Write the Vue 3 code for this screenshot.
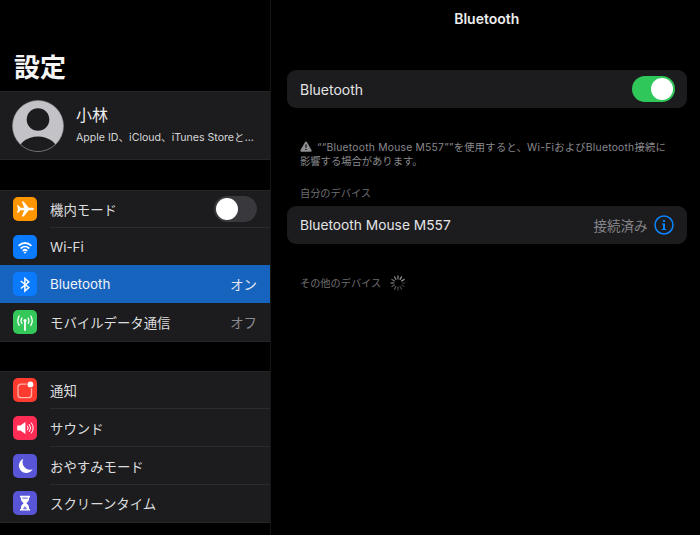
<script setup>
const groupOne = [
  { key: 'plane', label: '機内モード', bg: '#ff9500', toggle: true },
  { key: 'wifi', label: 'Wi-Fi', bg: '#0a7aff' },
  { key: 'bt', label: 'Bluetooth', bg: '#0a7aff', value: 'オン', active: true },
  { key: 'cell', label: 'モバイルデータ通信', bg: '#34c759', value: 'オフ' }
]
const groupTwo = [
  { key: 'notify', label: '通知', bg: '#ff3b30' },
  { key: 'sound', label: 'サウンド', bg: '#ff2d55' },
  { key: 'moon', label: 'おやすみモード', bg: '#5856d6' },
  { key: 'hour', label: 'スクリーンタイム', bg: '#5856d6' }
]
const groups = [groupOne, groupTwo]
const spokes = Array.from({ length: 12 }, (_, i) => ({
  angle: i * 30,
  opacity: 0.2 + (((i + 9) % 12) / 11) * 0.6
}))
</script>

<template>
  <div class="screen">
    <aside class="sidebar">
      <h1 class="title">設定</h1>
      <section class="profile">
        <svg class="avatar" viewBox="0 0 52 52">
          <defs>
            <clipPath id="avatar-clip"><circle cx="26" cy="26" r="25.5" /></clipPath>
          </defs>
          <circle cx="26" cy="26" r="25.5" fill="#c2c2c7" />
          <g clip-path="url(#avatar-clip)">
            <circle cx="26" cy="19.500" r="11.300" fill="#1c1c1e" />
            <ellipse cx="26" cy="52" rx="20" ry="15.5" fill="#1c1c1e" />
          </g>
          <circle cx="26" cy="26" r="25.5" fill="none" stroke="#8e8e93" stroke-width="0.6" />
        </svg>
        <div class="profile-text">
          <div class="profile-name">小林</div>
          <div class="profile-sub">Apple ID、iCloud、iTunes Storeと...</div>
        </div>
      </section>

      <section v-for="(group, g) in groups" :key="g" class="group">
        <div v-for="row in group" :key="row.key" class="row" :class="{ active: row.active }">
          <span class="icon" :style="{ background: row.bg }">
            <svg viewBox="0 0 24 24">
              <path v-if="row.key === 'plane'" fill="#fff" d="M4 8.200h1.300l2.300 2.500h3.600L8.800 4.500h1.900l5 6.200h3.200c1 0 2.100.6 2.100 1.300s-1.100 1.300-2.100 1.300h-3.200l-5 6.200H8.800l2.400-6.200H7.600l-2.300 2.500H4l1-3.800z" />
              <g v-else-if="row.key === 'wifi'" fill="none" stroke="#fff" stroke-width="1.800" stroke-linecap="round">
                <path d="M6.200 10.300a8.500 8.500 0 0 1 11.600 0" />
                <path d="M8.300 13a5.400 5.400 0 0 1 7.400 0" />
                <path d="M10.300 15.500a2.500 2.500 0 0 1 3.400 0" />
                <circle cx="12" cy="17.600" r=".6" fill="#fff" stroke-width="1" />
              </g>
              <path v-else-if="row.key === 'bt'" fill="none" stroke="#fff" stroke-width="1.500" stroke-linejoin="miter" d="M7.800 9l8 6.500-3.900 3.500V6.500l3.900 3.500-8 6.500" />
              <g v-else-if="row.key === 'cell'" fill="none" stroke="#fff" stroke-width="1.300" stroke-linecap="round">
                <path d="M12 12v8" stroke-width="1.800" />
                <circle cx="12" cy="10.600" r="1.600" fill="#fff" stroke="none" />
                <path d="M8.900 8a5 5 0 0 0 0 5.400M15.100 8a5 5 0 0 1 0 5.400" />
                <path d="M6.200 6a9 9 0 0 0 0 9.400M17.800 6a9 9 0 0 1 0 9.400" />
              </g>
              <g v-else-if="row.key === 'notify'">
                <rect x="5" y="6.200" width="13.500" height="13.500" rx="3" fill="none" stroke="#ffb4ae" stroke-width="1.300" />
                <circle cx="17.400" cy="6.400" r="4" fill="#ff3b30" />
                <circle cx="17.400" cy="6.400" r="2.900" fill="#fff" />
              </g>
              <g v-else-if="row.key === 'sound'">
                <path fill="#fff" d="M4.200 9.400h3.200L12.400 6v12l-5-3.400H4.200z" />
                <path fill="none" stroke="#fff" stroke-width="1" stroke-linecap="round" d="M14.500 10a3 3 0 0 1 0 4M16.400 8.400a6 6 0 0 1 0 7.200M18.400 6.900a8.600 8.600 0 0 1 0 10.200" />
              </g>
              <path v-else-if="row.key === 'moon'" fill="#fff" d="M10.300 5a7.500 7.500 0 0 0 9.300 10.200A7.300 7.300 0 1 1 10.300 5z" />
              <g v-else-if="row.key === 'hour'">
                <path fill="#fff" d="M7 4.800h10v1.700h-1v1.800c0 1.700-1.600 2.900-2.600 3.900 1 1 2.600 2.200 2.600 3.900v1.800h1v1.700H7v-1.700h1v-1.800c0-1.700 1.600-2.900 2.600-3.900C9.600 11.200 8 10 8 8.300V6.500H7z" />
                <path fill="#5856d6" d="M9.400 6.500h5.200v1.200H9.400zM12 15l2.300 3.200H9.700z" opacity="0.8" />
              </g>
            </svg>
          </span>
          <span class="row-body">
            <span class="row-label">{{ row.label }}</span>
            <span v-if="row.value" class="row-value">{{ row.value }}</span>
            <span v-if="row.toggle" class="switch off"><span class="knob"></span></span>
          </span>
        </div>
      </section>
    </aside>

    <main class="detail">
      <header class="detail-title">Bluetooth</header>

      <div class="card first-card">
        <span class="card-label">Bluetooth</span>
        <span class="switch on"><span class="knob"></span></span>
      </div>

      <p class="warning">
        <svg class="warn-icon" viewBox="0 0 12 11">
          <path fill="#8e8e93" fill-rule="evenodd" d="M6 .4c.4 0 .7.2.9.5l4.7 8.300c.4.7-.1 1.500-.9 1.500H1.300c-.8 0-1.300-.8-.9-1.500L5.100.9C5.300.6 5.600.4 6 .4zM5.400 3.500l.2 3.600h.8l.2-3.600zM6 7.700a.7.7 0 1 0 0 1.400.7.7 0 0 0 0-1.400z" />
        </svg>
        <span class="warning-first">““Bluetooth Mouse M557””を使用すると、Wi-FiおよびBluetooth接続に</span><br />影響する場合があります。
      </p>

      <div class="section-label my-devices">自分のデバイス</div>
      <div class="card">
        <span class="card-label mouse">Bluetooth Mouse M557</span>
        <span class="status">接続済み</span>
        <svg class="info" viewBox="0 0 20 20">
          <circle cx="10" cy="10" r="9" fill="none" stroke="#0a84ff" stroke-width="1.500" />
          <circle cx="10" cy="5.900" r="1.200" fill="#0a84ff" />
          <path fill="#0a84ff" d="M7.900 8.500h3.100v5.500h1.200v1.100H7.700V14h1.300V9.600H7.900z" />
        </svg>
      </div>

      <div class="section-label others">
        <span>その他のデバイス</span>
        <svg class="spinner" viewBox="0 0 20 20">
          <rect v-for="s in spokes" :key="s.angle" x="9.300" y="1.500" width="1.400" height="4.600" rx=".7" fill="#c7c7cc" :opacity="s.opacity" :transform="`rotate(${s.angle} 10 10)`" />
        </svg>
      </div>
    </main>
  </div>
</template>

<style>
html, body { margin: 0; background: #000; }
</style>

<style scoped>
.screen {
  display: flex;
  width: 700px;
  height: 535px;
  overflow: hidden;
  background: #000;
  color: #fff;
  font-family: Inter, "Noto Sans CJK JP", sans-serif;
}
.sidebar {
  box-sizing: border-box;
  width: 271px;
  flex: none;
  border-right: 1px solid #151516;
}
.title {
  margin: 0;
  height: 91px;
  box-sizing: border-box;
  padding: 52px 0 0 14px;
  font-size: 26px;
  line-height: 32px;
  font-weight: 700;
  color: #f5f5f5;
}
.profile {
  display: flex;
  align-items: center;
  height: 69px;
  box-sizing: border-box;
  padding-left: 12px;
  background: #1c1c1e;
  border-top: 1px solid #262628;
  border-bottom: 1px solid #262628;
}
.avatar { width: 52px; height: 52px; flex: none; }
.profile-text { margin-left: 12px; min-width: 0; padding-bottom: 2px; }
.profile-name { font-size: 16px; line-height: 22px; color: #ececec; margin-bottom: 5px; }
.profile-sub { font-size: 10.600px; line-height: 14px; color: #d6d6d8; white-space: nowrap; }
.group {
  margin-top: 29px;
  background: #1c1c1e;
  border-bottom: 1px solid #262628;
}
.profile + .group { margin-top: 29.500px; }
.row {
  display: flex;
  align-items: stretch;
  height: 37.800px;
  box-sizing: border-box;
  padding-left: 13px;
}
.row:first-child { box-shadow: inset 0 1px 0 #262628; }
.row.active { background: #1764be; }
.row.active + .row .row-body { border-top-color: transparent; }
.icon {
  flex: none;
  width: 24px;
  height: 24px;
  margin-top: 7.400px;
  border-radius: 5px;
  overflow: hidden;
}
.icon svg { display: block; width: 24px; height: 24px; }
.row-body {
  flex: 1;
  display: flex;
  align-items: center;
  justify-content: space-between;
  margin-left: 13px;
  padding-right: 13px;
  min-width: 0;
  border-top: 1px solid #2c2c2e;
}
.row:first-child .row-body, .row.active .row-body { border-top-color: transparent; }
.row-label { font-size: 13.400px; color: #dcdcde; }
.row.active .row-label { color: #f2f4f8; }
.row-value { font-size: 13.400px; color: #8c8c90; }
.row.active .row-value { color: #e4e9f2; }
.switch {
  display: flex;
  align-items: center;
  box-sizing: border-box;
  width: 43px;
  height: 26px;
  padding: 2px;
  border-radius: 13px;
  flex: none;
}
.switch.off { background: #39393d; }
.switch.on { background: #30c75a; justify-content: flex-end; margin-left: auto; }
.knob {
  display: block;
  width: 22px;
  height: 22px;
  border-radius: 50%;
  background: #fff;
}
.detail {
  flex: 1;
  min-width: 0;
  box-sizing: border-box;
  padding: 0 13.500px 0 16px;
}
.detail-title {
  height: 70px;
  box-sizing: border-box;
  padding-top: 10px;
  text-align: center;
  font-size: 14px;
  line-height: 18px;
  font-weight: 600;
  color: #ececee;
}
.card {
  display: flex;
  align-items: center;
  height: 38px;
  box-sizing: border-box;
  padding: 0 13px;
  border-radius: 9px;
  background: #1c1c1e;
}
.first-card { padding-right: 12px; }
.card-label { font-size: 14px; color: #e4e4e6; }
.card-label.mouse { font-size: 13.750px; }
.status { margin-left: auto; font-size: 13.500px; color: #838387; }
.info { width: 20px; height: 20px; margin-left: 6px; flex: none; }
.warning {
  margin: 32px 0 0;
  padding: 0 13px;
  font-size: 10.300px;
  line-height: 14px;
  color: #88888c;
  white-space: nowrap;
}
.warning-first { letter-spacing: 0.24px; }
.warn-icon { width: 12px; height: 11px; margin-right: 5px; vertical-align: -1px; }
.section-label {
  padding: 0 13px;
  font-size: 10.200px;
  line-height: 14px;
  color: #6f6f73;
}
.my-devices { margin-top: 18px; margin-bottom: 6px; }
.others {
  display: flex;
  align-items: center;
  margin-top: 30px;
}
.spinner { width: 18px; height: 18px; margin-left: 8px; flex: none; }
</style>
